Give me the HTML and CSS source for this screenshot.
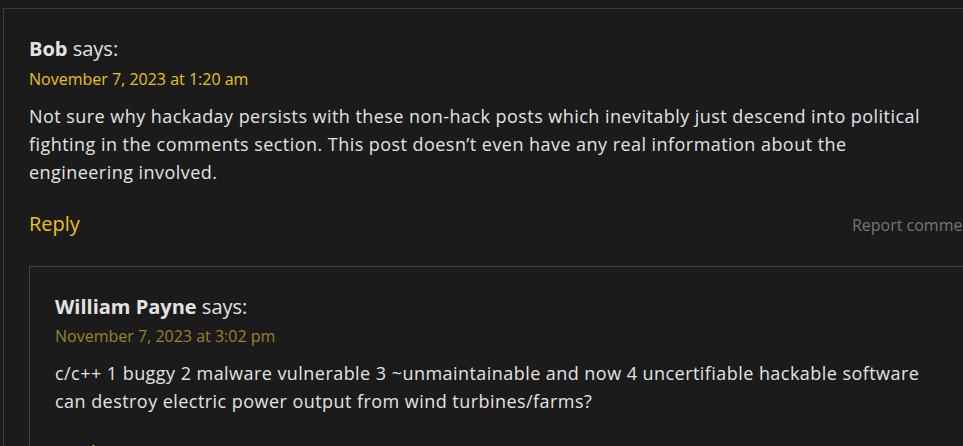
FILE: index.html
```html
<!DOCTYPE html>
<html lang="en">
<head>
  <meta charset="UTF-8" />
  <meta name="viewport" content="width=device-width, initial-scale=1" />
  <title>Comments</title>
  <link rel="stylesheet" href="styles.css">
</head>
<body>
  <ol class="comment-list">
    <li class="comment">
      <article class="comment-body">
        <footer class="comment-meta">
          <div class="comment-author"><b class="fn">Bob</b> <span class="says">says:</span></div>
          <div class="comment-date"><a href="#">November 7, 2023 at 1:20 am</a></div>
        </footer>
        <div class="comment-content">
          <p>Not sure why hackaday persists with these non-hack posts which inevitably just descend into political fighting in the comments section. This post doesn’t even have any real information about the engineering involved.</p>
        </div>
        <div class="comment-actions">
          <a class="reply" href="#">Reply</a>
          <a class="report" href="#">Report comment</a>
        </div>
      </article>

      <ol class="children">
        <li class="comment">
          <article class="comment-body">
            <footer class="comment-meta">
              <div class="comment-author"><b class="fn">William Payne</b> <span class="says">says:</span></div>
              <div class="comment-date faded"><a href="#">November 7, 2023 at 3:02 pm</a></div>
            </footer>
            <div class="comment-content">
              <p>c/c++ 1 buggy 2 malware vulnerable 3 ~unmaintainable and now 4 uncertifiable hackable software can destroy electric power output from wind turbines/farms?</p>
            </div>
            <div class="comment-actions">
              <a class="reply" href="#">Reply</a>
              <a class="report" href="#">Report comment</a>
            </div>
          </article>
        </li>
      </ol>
    </li>
  </ol>
</body>
</html>
```

FILE: styles.css
```css
html, body {
  margin: 0;
  background-color: #1b1b1b;
  overflow: hidden;
}

body {
  padding: 8px 0 0 3px;
  font-family: "Open Sans", "Liberation Sans", sans-serif;
  color: #e3e3e3;
}

a {
  text-decoration: none;
}

.comment-list, .children {
  list-style: none;
  margin: 0;
  padding: 0;
}

.comment-list > .comment {
  border: 1px solid #3c3c3c;
  border-right: none;
  padding: 25px 0 0 25px;
  width: 1100px;
}

.children > .comment {
  border: 1px solid #444444;
  border-right: none;
  padding: 25px 0 0 25px;
}

.comment-author {
  font-size: 20px;
  line-height: 30px;
}

.comment-author .fn {
  font-weight: 700;
}

.comment-date {
  font-size: 16px;
  line-height: 24px;
  margin-top: 3px;
}

.children .comment-date {
  margin-top: 2px;
}

.comment-date a {
  color: #e8c21c;
}

.comment-date.faded a {
  color: #9a8226;
}

.comment-content p {
  margin: 11px 0 0;
  font-size: 18px;
  line-height: 28px;
  letter-spacing: 0.45px;
  width: 900px;
}

.children .comment-content p {
  width: 880px;
}

.comment-actions {
  display: flex;
  justify-content: space-between;
  align-items: baseline;
  width: 949px;
  margin-top: 24px;
  padding-bottom: 29px;
}

.children .comment-actions {
  width: 923px;
}

.reply {
  color: #e8c21c;
  font-size: 20px;
}

.report {
  color: #767676;
  font-size: 16px;
}
```
